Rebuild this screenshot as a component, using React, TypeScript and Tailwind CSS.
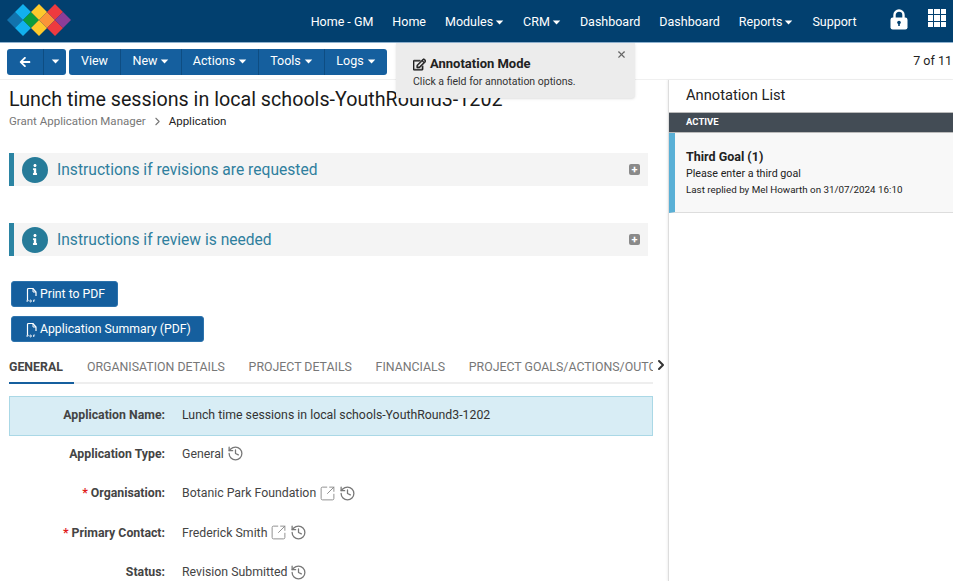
import { FaArrowLeft, FaInfo, FaRegEdit } from "react-icons/fa"
import { ChevronRight, History, SquareArrowOutUpRight, X } from "lucide-react"

const navItems = [
  { label: "Home - GM" },
  { label: "Home" },
  { label: "Modules", caret: true },
  { label: "CRM", caret: true },
  { label: "Dashboard" },
  { label: "Dashboard" },
  { label: "Reports", caret: true },
  { label: "Support" },
]

const toolItems = [
  { label: "View", width: "w-[52px]" },
  { label: "New", caret: true, width: "w-[61px]" },
  { label: "Actions", caret: true, width: "w-[77px]" },
  { label: "Tools", caret: true, width: "w-[66px]" },
  { label: "Logs", caret: true, width: "w-[62px]" },
]

const diamonds = [
  { x: 15, y: 20, fill: "#1273ad" },
  { x: 23, y: 12, fill: "#12b0ee" },
  { x: 23, y: 28, fill: "#12b0ee" },
  { x: 31, y: 20, fill: "#0c9c3c" },
  { x: 39, y: 12, fill: "#fdc92c" },
  { x: 39, y: 28, fill: "#fdc92c" },
  { x: 47, y: 20, fill: "#fb9438" },
  { x: 55, y: 12, fill: "#ee3a3f" },
  { x: 55, y: 28, fill: "#ee3a3f" },
  { x: 63, y: 20, fill: "#8c3d98" },
]

const tabs = ["ORGANISATION DETAILS", "PROJECT DETAILS", "FINANCIALS", "PROJECT GOALS/ACTIONS/OUTCOMES"]

const fields = [
  { label: "Application Type:", value: "General" },
  { label: "Organisation:", value: "Botanic Park Foundation", required: true, link: true },
  { label: "Primary Contact:", value: "Frederick Smith", required: true, link: true },
  { label: "Status:", value: "Revision Submitted" },
]

function Caret({ className = "" }: { className?: string }) {
  return (
    <svg viewBox="0 0 10 6" className={`w-[9px] h-[5px] fill-current ${className}`}>
      <path d="M0.5 0.5h9L5 5.5z" />
    </svg>
  )
}

function Logo() {
  return (
    <svg width="80" height="42" viewBox="0 0 80 42" className="shrink-0">
      {diamonds.map((d, i) => (
        <path key={i} d={`M${d.x - 8} ${d.y}L${d.x} ${d.y - 8}L${d.x + 8} ${d.y}L${d.x} ${d.y + 8}z`} fill={d.fill} />
      ))}
    </svg>
  )
}

function LockIcon() {
  return (
    <svg viewBox="0 0 18 21" className="w-[18px] h-[21px]">
      <path d="M4.5 9V6a4.5 4.5 0 0 1 9 0v3" fill="none" stroke="#fff" strokeWidth="2.4" />
      <rect x="0.5" y="8.5" width="17" height="12" rx="2.2" fill="#fff" />
      <circle cx="9" cy="13.5" r="1.8" fill="#02406f" />
      <rect x="8.2" y="14" width="1.6" height="3" fill="#02406f" />
    </svg>
  )
}

function GridIcon() {
  return (
    <div className="grid grid-cols-3 gap-[1px] w-[18px] h-[18px]">
      {Array.from({ length: 9 }).map((_, i) => (
        <span key={i} className="bg-white" />
      ))}
    </div>
  )
}

function PdfIcon() {
  return (
    <svg viewBox="0 0 14 16" className="w-[14px] h-[16px] shrink-0">
      <path d="M2.5 13V2.5a1 1 0 0 1 1-1H8L11 5v4" fill="none" stroke="#fff" strokeWidth="1.2" />
      <path d="M8 1.5V5h3" fill="none" stroke="#fff" strokeWidth="1" />
      <path d="M2 15v-2h1.2v1H2M5 15v-2h1l.6 1-.6 1H5M8.5 15v-2h1.6M8.5 14h1.2" fill="none" stroke="#fff" strokeWidth="0.7" />
    </svg>
  )
}

function InstructionBox({ title }: { title: string }) {
  return (
    <div className="h-[33px] ml-[9px] w-[639px] flex items-center bg-[#f4f4f4] border-l-[5px] border-[#2b84a3] pl-[8px] pr-[8px]">
      <div className="w-[26px] h-[26px] rounded-full bg-[#267b99] flex items-center justify-center text-white">
        <FaInfo className="w-[10px] h-[11px]" />
      </div>
      <span className="ml-[9px] pt-[2px] text-[15.6px] text-[#2f7f9e]">{title}</span>
      <div className="ml-auto w-[11px] h-[11px] rounded-[2px] bg-[#8a8a8a] flex items-center justify-center text-white text-[11px] leading-none font-bold">
        +
      </div>
    </div>
  )
}

function PdfButton({ label }: { label: string }) {
  return (
    <button className="h-[26px] self-start ml-[11px] pl-[13px] pr-[12px] pt-[1px] flex items-center gap-[1px] rounded-[3px] bg-[#155f9e] border border-[#2d73ad] text-white text-[12.25px]">
      <PdfIcon />
      {label}
    </button>
  )
}

export default function App() {
  return (
    <div className="relative h-[581px] w-[953px] overflow-hidden bg-white text-[#333] font-['Roboto',sans-serif]">
      {/* Top nav */}
      <header className="h-[43px] bg-[#02406f] border-b border-[#8fb2cf] flex items-center pr-[7px]">
        <Logo />
        <nav className="ml-auto flex items-center gap-[19px] pt-[2px] text-white text-[12.5px]">
          {navItems.map((item, i) => (
            <span key={i} className="flex items-center gap-[2px]">
              {item.label}
              {item.caret && <Caret />}
            </span>
          ))}
        </nav>
        <div className="ml-[33.5px] mb-[3px]">
          <LockIcon />
        </div>
        <div className="ml-[20px] mb-[6px]">
          <GridIcon />
        </div>
      </header>

      {/* Toolbar */}
      <div className="h-[37px] border-b border-[#f0f0f0] flex items-center pl-[7px] pr-[1px] pt-[1px]">
        <div className="flex h-[26px] rounded-[3px] bg-[#155f9e] text-white overflow-hidden">
          <div className="w-[37px] flex items-center justify-center border-r border-[#0e4d82]">
            <FaArrowLeft className="w-[12px] h-[12px]" />
          </div>
          <div className="w-[22px] flex items-center justify-center">
            <Caret />
          </div>
        </div>
        <div className="ml-[3px] flex h-[26px] rounded-[3px] bg-[#155f9e] text-white text-[12.5px] overflow-hidden">
          {toolItems.map((item) => (
            <div
              key={item.label}
              className={`${item.width} flex items-center justify-center gap-[3px] border-r border-[#0e4d82] last:border-r-0`}
            >
              {item.label}
              {item.caret && <Caret />}
            </div>
          ))}
        </div>
        <span className="ml-auto text-[12.5px] text-[#222]">7 of 11</span>
      </div>

      {/* Annotation mode popover */}
      <div className="absolute left-[396px] top-[43px] w-[239px] h-[55px] bg-[#ececec] rounded-b-[3px] shadow-sm pl-[17px] pt-[13px] z-10">
        <X className="absolute right-[8px] top-[6px] w-[11px] h-[11px] text-[#666]" strokeWidth={2.5} />
        <div className="flex items-center gap-[4px] text-[13px] font-bold text-[#222] leading-[16px]">
          <FaRegEdit className="w-[13px] h-[13px]" stroke="currentColor" strokeWidth={24} />
          Annotation Mode
        </div>
        <p className="mt-[3px] text-[10.5px] text-[#333] leading-[14px]">Click a field for annotation options.</p>
      </div>

      <div className="flex">
        {/* Left column */}
        <main className="w-[668px] shrink-0 flex flex-col">
          <h1 className="mt-[7px] ml-[9px] text-[19.7px] leading-[26px] text-[#1a1a1a]">
            Lunch time sessions in local schools-YouthRound3-1202
          </h1>
          <div className="ml-[9px] flex items-center text-[11.5px] leading-[16px]">
            <span className="text-[#777]">Grant Application Manager</span>
            <ChevronRight className="mx-[5px] w-[13px] h-[13px] text-[#777]" />
            <span className="text-[#222]">Application</span>
          </div>

          <div className="mt-[24px] flex flex-col gap-[37px]">
            <InstructionBox title="Instructions if revisions are requested" />
            <InstructionBox title="Instructions if review is needed" />
          </div>

          <div className="mt-[25px] flex flex-col gap-[9px]">
            <PdfButton label="Print to PDF" />
            <PdfButton label="Application Summary (PDF)" />
          </div>

          {/* Tabs */}
          <div className="relative mt-[12px] ml-[9px] w-[644px] h-[30px] border-b-2 border-[#eee] flex text-[12.35px] leading-[26px]">
            <div className="w-[65px] h-[30px] shrink-0 font-bold text-[#444] border-b-2 border-[#155f9e]">GENERAL</div>
            <div className="flex gap-[23.7px] pl-[13px] overflow-hidden text-[#777] whitespace-nowrap">
              {tabs.map((t) => (
                <span key={t}>{t}</span>
              ))}
            </div>
            <ChevronRight className="absolute -right-[16px] top-[3px] w-[16px] h-[16px] text-[#333]" strokeWidth={3} />
          </div>

          {/* Highlighted field */}
          <div className="mt-[12px] ml-[9px] w-[644px] h-[40px] bg-[#d8edf5] border border-[#aad8e6] flex items-center pb-[1px] text-[12.3px]">
            <span className="w-[155px] shrink-0 text-right font-bold text-[#444]">Application Name:</span>
            <span className="ml-[17px] text-[#333]">Lunch time sessions in local schools-YouthRound3-1202</span>
          </div>

          {/* Fields */}
          <div className="mt-[-2px] flex flex-col">
            {fields.map((f) => (
              <div key={f.label} className="h-[39.5px] shrink-0 ml-[9px] flex items-center text-[12.3px]">
                <span className="w-[156px] shrink-0 text-right font-bold text-[#444]">
                  {f.required && <span className="text-[#e01b1b] mr-[3px]">*</span>}
                  {f.label}
                </span>
                <span className="ml-[17px] text-[#444]">{f.value}</span>
                {f.link && <SquareArrowOutUpRight className="ml-[3px] w-[17px] h-[17px] text-[#888]" strokeWidth={1.3} />}
                <History className="ml-[3px] w-[17px] h-[17px] text-[#777]" strokeWidth={1.8} />
              </div>
            ))}
          </div>
        </main>

        {/* Annotation list */}
        <aside className="flex-1 border-l border-[#ddd] shadow-[-1px_0_2px_rgba(0,0,0,0.06)] h-[501px]">
          <div className="h-[32px] pl-[17px] pb-[2px] flex items-center text-[14.7px] text-[#222]">Annotation List</div>
          <div className="h-[21px] bg-[#434c55] border-y border-[#bbb] pl-[17px] flex items-center text-white text-[9.5px] font-bold">
            ACTIVE
          </div>
          <div className="h-[80px] bg-[#f8f8f8] border-l-[6px] border-b border-[#5ab0d6] border-b-[#ddd] pl-[11px] pt-[15px]">
            <div className="text-[12.5px] font-bold text-[#222] leading-[17px]">Third Goal (1)</div>
            <div className="mt-[1px] text-[10.7px] text-[#222] leading-[15px]">Please enter a third goal</div>
            <div className="mt-[1px] text-[9.8px] text-[#222] leading-[15px]">Last replied by Mel Howarth on 31/07/2024 16:10</div>
          </div>
        </aside>
      </div>
    </div>
  )
}
